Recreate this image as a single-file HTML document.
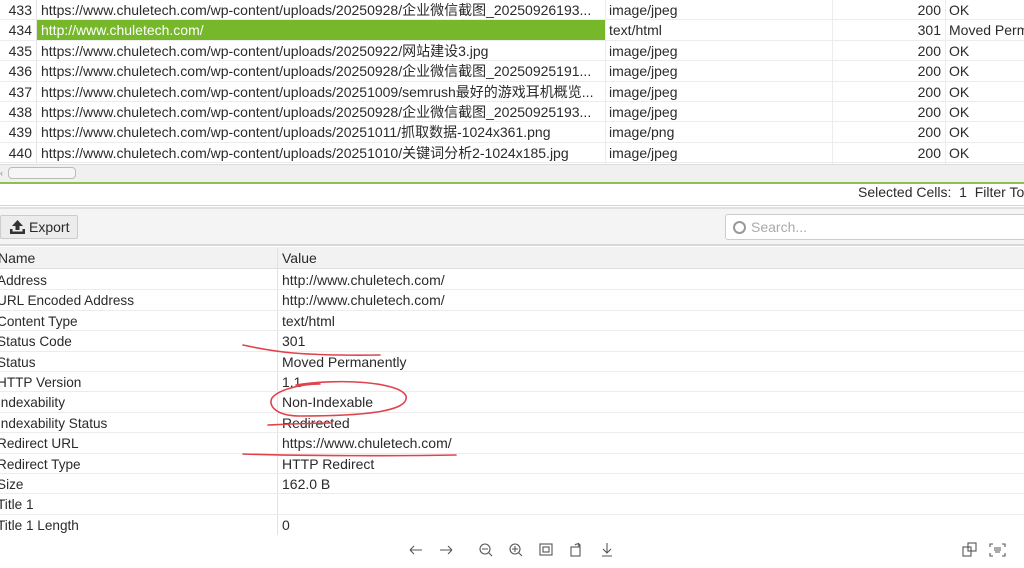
<!DOCTYPE html>
<html><head><meta charset="utf-8">
<style>
*{margin:0;padding:0;box-sizing:border-box}
body{width:1024px;height:568px;overflow:hidden;background:#fff;font-family:"Liberation Sans","Noto Sans CJK SC",sans-serif;font-size:14px;color:#2a2a2a;position:relative}
.r{position:absolute;left:0;width:1024px;height:20.4px;border-bottom:1px solid #ececec;line-height:21px;white-space:nowrap}
.r span{position:absolute;top:0}
.n{left:0;width:37px;text-align:right;padding-right:4px;border-right:1px solid #e4e4e4;height:20px}
.u{left:41px}
.c{left:609px}
.s{left:900px;width:41px;text-align:right}
.t{left:949px}
.vl{position:absolute;top:0;height:165px;width:1px;background:#ececec}
.d{position:absolute;left:0;width:1024px;height:20.4px;border-bottom:1px solid #ececec;line-height:21px;white-space:nowrap;font-size:13.6px}
.d span{position:absolute;top:0}
.d .a{left:-3px}.d .b{left:282px;font-size:14px}
</style></head><body>
<div class="vl" style="left:605px"></div>
<div class="vl" style="left:832px"></div>
<div class="vl" style="left:945px"></div>
<div class="r" style="top:0"><span class="n">433</span><span class="u">https://www.chuletech.com/wp-content/uploads/20250928/企业微信截图_20250926193...</span><span class="c">image/jpeg</span><span class="s">200</span><span class="t">OK</span></div>
<div class="r" style="top:20.4px"><span class="n">434</span><span style="left:37px;width:568px;height:20px;background:#76b82a;color:#fff;padding-left:4px">http://www.chuletech.com/</span><span class="c">text/html</span><span class="s">301</span><span class="t">Moved Permanently</span></div>
<div class="r" style="top:40.8px"><span class="n">435</span><span class="u">https://www.chuletech.com/wp-content/uploads/20250922/网站建设3.jpg</span><span class="c">image/jpeg</span><span class="s">200</span><span class="t">OK</span></div>
<div class="r" style="top:61.2px"><span class="n">436</span><span class="u">https://www.chuletech.com/wp-content/uploads/20250928/企业微信截图_20250925191...</span><span class="c">image/jpeg</span><span class="s">200</span><span class="t">OK</span></div>
<div class="r" style="top:81.6px"><span class="n">437</span><span class="u">https://www.chuletech.com/wp-content/uploads/20251009/semrush最好的游戏耳机概览...</span><span class="c">image/jpeg</span><span class="s">200</span><span class="t">OK</span></div>
<div class="r" style="top:102px"><span class="n">438</span><span class="u">https://www.chuletech.com/wp-content/uploads/20250928/企业微信截图_20250925193...</span><span class="c">image/jpeg</span><span class="s">200</span><span class="t">OK</span></div>
<div class="r" style="top:122.4px"><span class="n">439</span><span class="u">https://www.chuletech.com/wp-content/uploads/20251011/抓取数据-1024x361.png</span><span class="c">image/png</span><span class="s">200</span><span class="t">OK</span></div>
<div class="r" style="top:142.8px"><span class="n">440</span><span class="u">https://www.chuletech.com/wp-content/uploads/20251010/关键词分析2-1024x185.jpg</span><span class="c">image/jpeg</span><span class="s">200</span><span class="t">OK</span></div>
<div style="position:absolute;top:164px;left:0;width:1024px;height:18px;background:#f0f0f0;border-top:1px solid #ddd"></div>
<div style="position:absolute;top:167px;left:8px;width:68px;height:12px;border:1px solid #bbb;border-radius:4px;background:#f6f6f6"></div>
<div style="position:absolute;top:168px;left:0;font-size:9px;color:#888">‹</div>
<div style="position:absolute;top:182px;left:0;width:1024px;height:2px;background:#8cc152"></div>
<div style="position:absolute;top:184px;left:0;width:1024px;height:22px;background:#fff;border-bottom:1px solid #d4d4d4;line-height:16px;padding-top:0;white-space:nowrap;overflow:hidden"><span style="position:absolute;left:858px;top:0">Selected Cells:&nbsp; 1&nbsp; Filter Total</span></div>
<div style="position:absolute;top:207px;left:0;width:1024px;height:39px;background:#f4f4f4;border-top:2px solid #e0e0e0;border-bottom:2px solid #d8d8d8"></div>
<div style="position:absolute;top:215px;left:0;width:78px;height:24px;border:1px solid #ccc;border-radius:2px;background:#ececec;line-height:22px;padding-left:28px;font-size:14px">Export</div>
<svg style="position:absolute;top:219px;left:9px" width="17" height="16" viewBox="0 0 17 16"><path d="M8.5 1L3 7h3.5v4h4V7H14z" fill="#333"/><path d="M1 10v5h15v-5h-2.5v2.5h-10V10z" fill="#333"/></svg>
<div style="position:absolute;top:214px;left:725px;width:310px;height:26px;border:1px solid #ccc;border-radius:3px;background:#fff;line-height:25px;padding-left:25px;color:#aaa">Search...</div>
<div style="position:absolute;top:221px;left:733px;width:13px;height:13px;border:2px solid #999;border-radius:50%"></div>
<div style="position:absolute;top:247px;left:0;width:1024px;height:22px;background:#f2f2f2;border-bottom:1px solid #ddd;line-height:22px"><span style="position:absolute;left:-2px">Name</span><span style="position:absolute;left:282px">Value</span></div>
<div style="position:absolute;top:247px;left:277px;width:1px;height:290px;background:#e2e2e2"></div>
<div class="d" style="top:270px"><span class="a">Address</span><span class="b">http://www.chuletech.com/</span></div>
<div class="d" style="top:290.4px"><span class="a">URL Encoded Address</span><span class="b">http://www.chuletech.com/</span></div>
<div class="d" style="top:310.8px"><span class="a">Content Type</span><span class="b">text/html</span></div>
<div class="d" style="top:331.2px"><span class="a">Status Code</span><span class="b">301</span></div>
<div class="d" style="top:351.6px"><span class="a">Status</span><span class="b">Moved Permanently</span></div>
<div class="d" style="top:372px"><span class="a">HTTP Version</span><span class="b">1.1</span></div>
<div class="d" style="top:392.4px"><span class="a">Indexability</span><span class="b">Non-Indexable</span></div>
<div class="d" style="top:412.8px"><span class="a">Indexability Status</span><span class="b">Redirected</span></div>
<div class="d" style="top:433.2px"><span class="a">Redirect URL</span><span class="b">https://www.chuletech.com/</span></div>
<div class="d" style="top:453.6px"><span class="a">Redirect Type</span><span class="b">HTTP Redirect</span></div>
<div class="d" style="top:474px"><span class="a">Size</span><span class="b">162.0 B</span></div>
<div class="d" style="top:494.4px"><span class="a">Title 1</span><span class="b"></span></div>
<div class="d" style="top:514.8px;border:0;height:20px;overflow:hidden"><span class="a">Title 1 Length</span><span class="b">0</span></div>
<div style="position:absolute;top:535px;left:0;width:1024px;height:33px;background:#fff"></div>
<svg style="position:absolute;top:0;left:0" width="1024" height="568"><g fill="none" stroke="#e0434d" stroke-width="1.6" stroke-linecap="round">
<path d="M243 345 C275 352 300 356 380 355"/>
<path d="M296 385 C340 378 400 382 406 396 C410 412 360 416 300 416 C275 416 268 405 272 398 C278 390 300 384 320 384"/>
<path d="M268 425 C290 424 310 423 332 423"/>
<path d="M243 454 C300 456 400 456 456 455"/>
</g></svg>
<svg style="position:absolute;top:540px;left:400px" width="230" height="20" viewBox="0 0 230 20" fill="none" stroke="#555" stroke-width="1.1">
<path d="M10 10h12M10 10l4-4M10 10l4 4"/>
<path d="M40 10h12M52 10l-4-4M52 10l-4 4"/>
<circle cx="85" cy="9" r="5"/><path d="M82 9h6M89 13l3 3"/>
<circle cx="115" cy="9" r="5"/><path d="M112 9h6M115 6v6M119 13l3 3"/>
<rect x="140" y="4" width="12" height="11"/><rect x="143" y="7" width="6" height="5"/>
<rect x="171" y="7" width="9" height="9"/><path d="M175 5c2-2 5-1 5 2M178 3l2 2-2 1"/>
<path d="M207 3v10M203 9l4 4 4-4M202 16h10"/>
</svg>
<svg style="position:absolute;top:540px;left:960px" width="50" height="20" viewBox="0 0 50 20" fill="none" stroke="#555" stroke-width="1.1">
<rect x="3" y="7" width="8" height="9"/><rect x="8" y="3" width="8" height="8"/>
<path d="M33 4h-3v3M42 4h3v3M33 16h-3v-3M42 16h3v-3M34 8h7M34 10h7M35 12h5"/>
</svg>
</body></html>
